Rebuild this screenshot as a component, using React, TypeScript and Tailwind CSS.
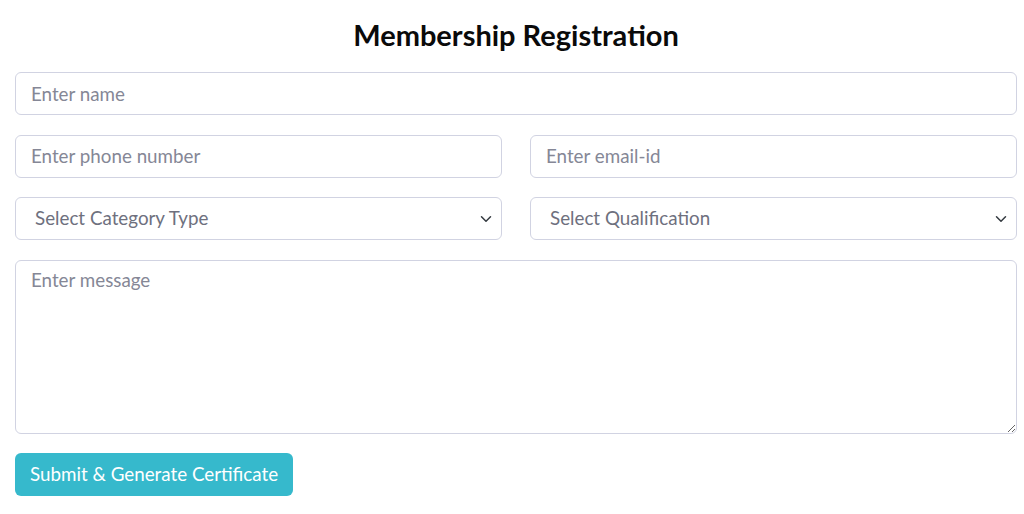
import React from "react";

const field =
  "w-full h-[43px] rounded-[6px] border border-[#d1d3e2] bg-white px-[15px] pb-[1px] text-[18.8px] text-[#6e707e] placeholder:text-[#858796] outline-none";

function Chevron() {
  return (
    <svg width="12" height="12" viewBox="0 0 16 16" className="pointer-events-none absolute right-[10px] top-1/2 -translate-y-1/2">
      <path d="M2 5l6 6 6-6" fill="none" stroke="#343a40" strokeWidth="2" strokeLinecap="round" strokeLinejoin="round" />
    </svg>
  );
}

function Select({ label }: { label: string }) {
  return (
    <div className="relative w-full">
      <select
        defaultValue=""
        className="w-full h-[43px] appearance-none rounded-[6px] border border-[#d1d3e2] bg-white pl-[19px] pr-8 text-[18.8px] text-[#6e707e] outline-none"
      >
        <option value="">{label}</option>
      </select>
      <Chevron />
    </div>
  );
}

export default function App() {
  return (
    <div className="min-h-[514px] bg-white pl-[15px] pr-[7px] pt-[17px]" style={{ fontFamily: "Lato, 'Noto Sans', sans-serif" }}>
      <h3 className="text-center text-[29px] font-bold leading-[36px] text-[#0a0a0a] mb-[19px]">Membership Registration</h3>
      <div className="flex flex-col gap-[19.5px]">
        <input className={field} placeholder="Enter name" />
        <div className="grid grid-cols-2 gap-[28px]">
          <input className={field} placeholder="Enter phone number" />
          <input className={field} placeholder="Enter email-id" />
        </div>
        <div className="grid grid-cols-2 gap-[28px]">
          <Select label="Select Category Type" />
          <Select label="Select Qualification" />
        </div>
        <textarea
          className="w-full h-[174px] rounded-[6px] border border-[#d1d3e2] bg-white px-[15px] py-[5px] text-[18.8px] text-[#6e707e] placeholder:text-[#858796] outline-none"
          placeholder="Enter message"
        />
        <div>
          <button className="h-[43px] rounded-[6px] bg-[#36b9cc] px-[15px] text-[18.8px] text-white">
            Submit &amp; Generate Certificate
          </button>
        </div>
      </div>
    </div>
  );
}
